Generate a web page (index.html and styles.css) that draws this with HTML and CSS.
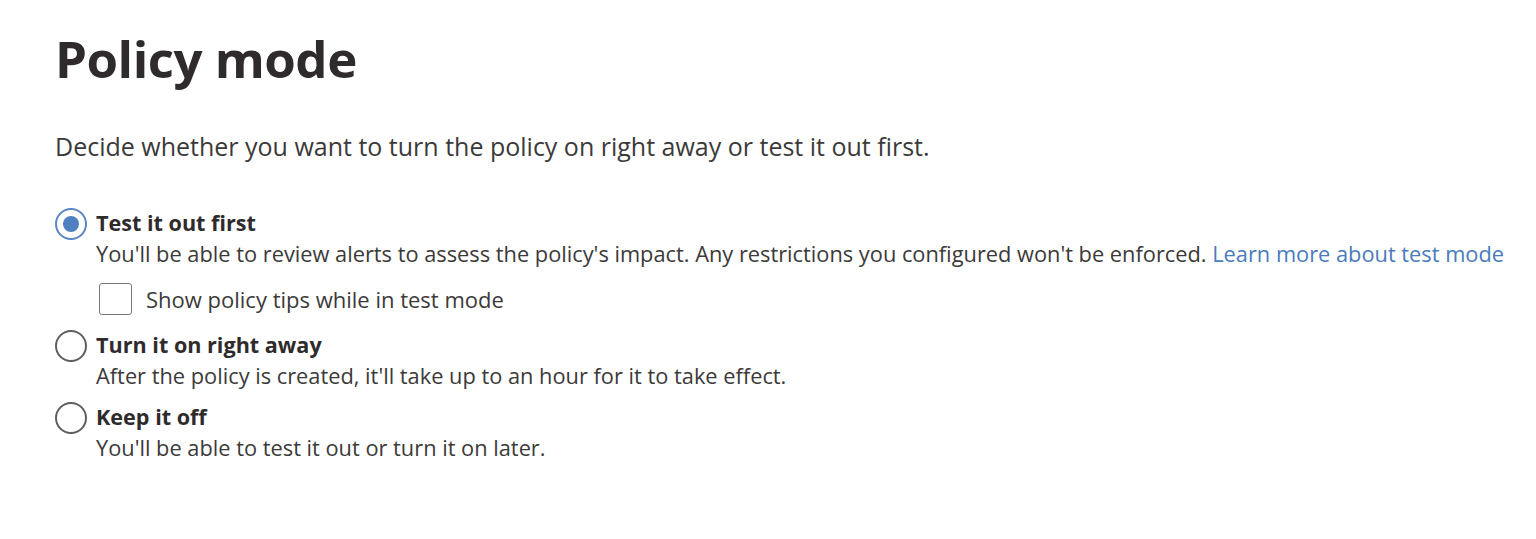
FILE: index.html
```html
<!DOCTYPE html>
<html>
<head>
<meta charset="utf-8">
<link rel="stylesheet" href="styles.css">
</head>
<body>
<main class="page">
  <h1 class="title">Policy mode</h1>
  <p class="intro">Decide whether you want to turn the policy on right away or test it out first.</p>
  <div class="options">
    <div class="option">
      <span class="radio checked"><span class="dot"></span></span>
      <div class="option-body">
        <div class="label">Test it out first</div>
        <div class="desc">You'll be able to review alerts to assess the policy's impact. Any restrictions you configured won't be enforced. <a class="link" href="#">Learn more about test mode</a></div>
        <div class="check-row">
          <span class="checkbox"></span>
          <span class="check-label">Show policy tips while in test mode</span>
        </div>
      </div>
    </div>
    <div class="option">
      <span class="radio"></span>
      <div class="option-body">
        <div class="label">Turn it on right away</div>
        <div class="desc">After the policy is created, it'll take up to an hour for it to take effect.</div>
      </div>
    </div>
    <div class="option">
      <span class="radio"></span>
      <div class="option-body">
        <div class="label">Keep it off</div>
        <div class="desc">You'll be able to test it out or turn it on later.</div>
      </div>
    </div>
  </div>
</main>
</body>
</html>
```
FILE: styles.css
```css
html, body {
  margin: 0;
  padding: 0;
  background: #ffffff;
}
body {
  font-family: "Open Sans", "Noto Sans", sans-serif;
  color: #323130;
}
.page {
  padding: 22px 0 0 55px;
}
.title {
  margin: 0;
  font-size: 51px;
  font-weight: 700;
  line-height: 72px;
  color: #2f2b2c;
  letter-spacing: -0.5px;
}
.intro {
  margin: 35px 0 0 0;
  font-size: 25px;
  line-height: 34px;
  color: #3b3a39;
}
.options {
  margin-top: 44px;
  display: flex;
  flex-direction: column;
  gap: 10px;
}
.option {
  display: flex;
  gap: 9px;
  align-items: flex-start;
}
.radio {
  flex: none;
  box-sizing: border-box;
  width: 32px;
  height: 32px;
  border: 2px solid #5f5e5d;
  border-radius: 50%;
  margin-top: 1px;
  display: flex;
  align-items: center;
  justify-content: center;
}
.radio.checked {
  border-color: #5a86c4;
}
.dot {
  width: 16px;
  height: 16px;
  border-radius: 50%;
  background: #4e80c2;
}
.label {
  font-size: 21.6px;
  font-weight: 700;
  line-height: 31px;
  color: #2f2b2c;
}
.desc {
  font-size: 21.8px;
  line-height: 31px;
  color: #3b3a39;
}
.link {
  color: #4a7bbd;
  text-decoration: none;
}
.check-row {
  display: flex;
  align-items: center;
  gap: 14px;
  margin-top: 14px;
  margin-bottom: 4px;
  margin-left: 3px;
}
.checkbox {
  flex: none;
  width: 33px;
  height: 32px;
  border: 1.5px solid #7a7978;
  border-radius: 3px;
  box-sizing: border-box;
}
.check-label {
  font-size: 22px;
  line-height: 31px;
  color: #3b3a39;
}
```
